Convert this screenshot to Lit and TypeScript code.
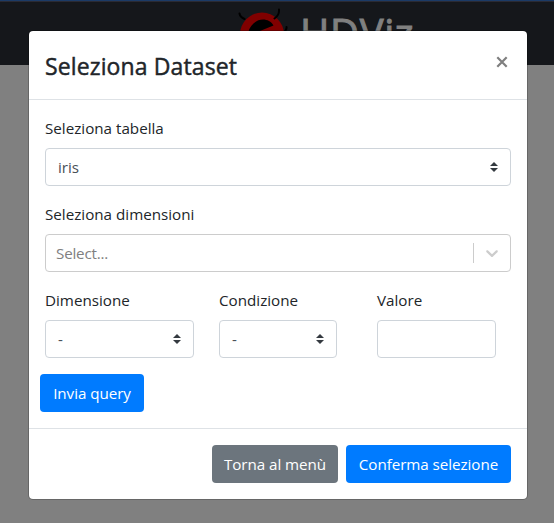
import { LitElement, html, css, svg } from "lit";
import { customElement } from "lit/decorators.js";

const arrows = html`<svg class="arrows" viewBox="0 0 4 5">${svg`<path fill="#343a40" d="M2 0L0 2h4zm0 5L0 3h4z"/>`}</svg>`;

@customElement("app-root")
export class AppRoot extends LitElement {
  static styles = css`
    :host { display: block; position: relative; width: 554px; height: 523px; overflow: hidden; background: #808080; font-family: "Open Sans", "Noto Sans", sans-serif; font-size: 15.2px; line-height: 24px; color: #212529; }
    * { box-sizing: border-box; }
    .nav { height: 65px; background: #15171b; border-top: 1px solid #1b3a66; display: flex; box-shadow: inset 0 1px #2a2a33; }
    .brand { display: flex; align-items: center; gap: 12px; margin-left: 236px; color: #808080; }
    .logo { width: 52px; height: 52px; }
    .name { font-size: 40px; line-height: 48px; font-weight: 500; letter-spacing: .6px; -webkit-text-stroke: 1px #808080; }
    .modal { position: absolute; left: 28px; top: 30px; width: 500px; height: 470px; background: #fff; background-clip: padding-box; border: 1px solid rgba(0,0,0,.2); border-radius: 5px; display: flex; flex-direction: column; }
    .head { height: 69px; padding: 16px; border-bottom: 1px solid #dee2e6; display: flex; justify-content: space-between; }
    .title { margin: 0; font-size: 23px; line-height: 38px; font-weight: 500; letter-spacing: .12px; -webkit-text-stroke: .45px #212529; }
    .close { width: 18px; height: 30px; display: flex; align-items: center; justify-content: center; }
    .close svg { width: 12px; height: 12px; }
    .body { height: 328px; padding: 16px; }
    .group { margin-bottom: 16px; }
    .label { margin-bottom: 8px; white-space: nowrap; }
    .field { height: 38px; border: 1px solid #ced4da; border-radius: 4px; padding: 0 12px; display: flex; align-items: center; justify-content: space-between; color: #495057; }
    .arrows { width: 8px; height: 10px; }
    .multi { border-color: #ccc; padding: 0 0 0 10px; color: #808080; letter-spacing: -.2px; }
    .ind { display: flex; align-items: center; height: 20px; border-left: 1px solid #ccc; padding: 0 8px; }
    .ind svg { width: 20px; height: 20px; fill: #ccc; }
    .row { display: grid; grid-template-columns: 149px 25px 118px 40px 119px; }
    .c1 { grid-column: 1; }
    .c2 { grid-column: 3; }
    .c3 { grid-column: 5; }
    .btn { height: 38px; border-radius: 4px; display: flex; align-items: center; justify-content: center; color: #fff; background: #007bff; white-space: nowrap; letter-spacing: -.06px; }
    .send { width: 104px; margin-left: -5px; }
    .foot { height: 71px; border-top: 1px solid #dee2e6; padding: 16px; display: flex; justify-content: flex-end; gap: 8px; }
    .back { width: 126px; background: #6c757d; }
    .ok { width: 165px; }
  `;

  render() {
    return html`
      <div class="nav"><div class="brand">
        <svg class="logo" viewBox="0 0 52 52" fill="none">
          <circle cx="26" cy="27.500" r="22" fill="#800000"/>
          <path d="M12 26C16 10.500 32 9 37.500 18.500L19 26L22 34H11Z" fill="#000"/>
          <path d="M3.500 6.500Q4 10 8.500 12M43 2.500Q43.500 8 38.500 11.500M50.500 20Q51 23 47 26" stroke="#000" stroke-width="2" stroke-linecap="round"/>
        </svg>
        <span class="name">HDViz</span>
      </div></div>
      <div class="modal">
        <div class="head">
          <h4 class="title">Seleziona Dataset</h4>
          <span class="close"><svg viewBox="0 0 12 12"><path d="M1.300 1.300L10.700 10.700M10.700 1.300L1.300 10.700" stroke="#7f7f7f" stroke-width="2.200"/></svg></span>
        </div>
        <div class="body">
          <div class="group"><div class="label">Seleziona tabella</div><div class="field"><span>iris</span>${arrows}</div></div>
          <div class="group"><div class="label">Seleziona dimensioni</div>
            <div class="field multi"><span>Select...</span><div class="ind"><svg viewBox="0 0 20 20"><path d="M4.516 7.548c0.436-0.446 1.043-0.481 1.576 0l3.908 3.747 3.908-3.747c0.533-0.481 1.141-0.446 1.574 0 0.436 0.445 0.408 1.197 0 1.615-0.406 0.418-4.695 4.502-4.695 4.502-0.217 0.223-0.502 0.335-0.787 0.335s-0.57-0.112-0.789-0.335c0 0-4.287-4.084-4.695-4.502s-0.436-1.17 0-1.615z"/></svg></div></div></div>
          <div class="row">
            <div class="group c1"><div class="label">Dimensione</div><div class="field"><span>-</span>${arrows}</div></div>
            <div class="group c2"><div class="label">Condizione</div><div class="field"><span>-</span>${arrows}</div></div>
            <div class="group c3"><div class="label">Valore</div><div class="field"></div></div>
          </div>
          <div class="btn send">Invia query</div>
        </div>
        <div class="foot"><div class="btn back">Torna al menù</div><div class="btn ok">Conferma selezione</div></div>
      </div>`;
  }
}
